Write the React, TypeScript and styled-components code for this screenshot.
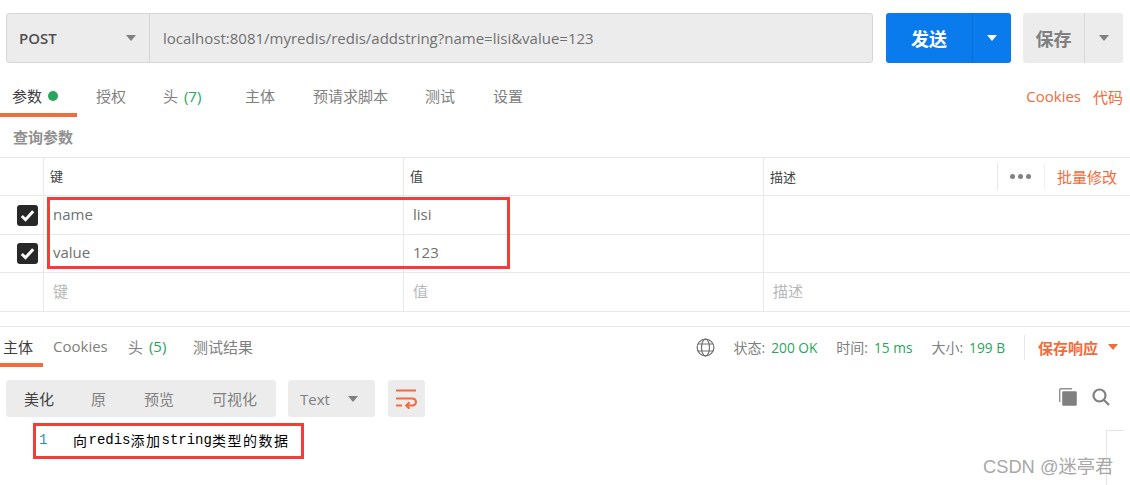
import React from "react";
import styled, { createGlobalStyle } from "styled-components";

const ORANGE = "#f26b3a";
const GREEN = "#26a65b";
const LINE = "#e8e8e8";
const FONT = `"Open Sans", "Noto Sans CJK SC", sans-serif`;

const Global = createGlobalStyle`
  html, body { margin: 0; padding: 0; background: #fff; }
  body { font-family: ${FONT}; font-size: 15px; color: #808080; }
`;

const Page = styled.div`
  position: relative;
  width: 1130px;
  height: 485px;
  overflow: hidden;
  background: #fff;
`;

const TopBar = styled.div`
  display: flex;
  padding: 13px 7px 0 6px;
  height: 50px;
`;

const UrlGroup = styled.div`
  display: flex;
  width: 867px;
  height: 50px;
  box-sizing: border-box;
  background: #ececec;
  border: 1px solid #d6d6d6;
  border-radius: 3px;
`;

const MethodSelect = styled.div`
  display: flex;
  align-items: center;
  justify-content: space-between;
  width: 143px;
  box-sizing: border-box;
  padding: 0 13px 0 12px;
  border-right: 1px solid #d6d6d6;
  color: #505050;
  font-size: 15px;
  font-weight: 600;
`;

const UrlText = styled.div`
  display: flex;
  align-items: center;
  padding-left: 13px;
  font-size: 15px;
  color: #707070;
`;

const Caret = styled.span<{ $color?: string; $w?: number }>`
  display: inline-block;
  width: 0;
  height: 0;
  border-left: ${(p) => (p.$w ?? 10) / 2}px solid transparent;
  border-right: ${(p) => (p.$w ?? 10) / 2}px solid transparent;
  border-top: 6px solid ${(p) => p.$color ?? "#808080"};
`;

const SplitButton = styled.div<{ $bg: string; $fg: string; $divider: string; $w: number; $ml: number; $main: number }>`
  display: grid;
  grid-template-columns: ${(p) => p.$main}px 1fr;
  width: ${(p) => p.$w}px;
  height: 50px;
  margin-left: ${(p) => p.$ml}px;
  border-radius: 3px;
  background: ${(p) => p.$bg};
  color: ${(p) => p.$fg};
  font-size: 18px;
  font-weight: 700;
  & > * {
    display: flex;
    align-items: center;
    justify-content: center;
  }
  & > *:first-child {
    border-right: 1px solid ${(p) => p.$divider};
  }
`;

const Tabs = styled.div<{ $h: number }>`
  display: flex;
  align-items: center;
  height: ${(p) => p.$h}px;
`;

const RequestTabs = styled(Tabs)`
  margin-top: 13px;
  justify-content: space-between;
  padding-right: 7px;
`;

const TabList = styled.div`
  display: flex;
  height: 100%;
`;

const Tab = styled.div<{ $w: number; $active?: boolean; $pl?: number }>`
  display: flex;
  align-items: center;
  box-sizing: border-box;
  width: ${(p) => p.$w}px;
  height: 100%;
  padding-top: 2px;
  padding-left: ${(p) => p.$pl ?? 0}px;
  border-bottom: 4px solid ${(p) => (p.$active ? ORANGE : "transparent")};
  color: ${(p) => (p.$active ? "#404040" : "#808080")};
  font-size: 15px;
  white-space: pre;
`;

const Count = styled.span`
  color: ${GREEN};
  margin-left: 2px;
`;

const Dot = styled.span`
  width: 10px;
  height: 10px;
  margin-left: 6px;
  border-radius: 50%;
  background: ${GREEN};
`;

const Links = styled.div`
  display: flex;
  gap: 12px;
  color: ${ORANGE};
  font-size: 15px;
  padding-bottom: 1px;
`;

const SectionTitle = styled.div`
  box-sizing: border-box;
  height: 40px;
  padding: 0 0 2px 13px;
  display: flex;
  align-items: center;
  font-size: 15px;
  font-weight: 700;
  color: #909090;
`;

const Table = styled.div`
  border-top: 1px solid ${LINE};
`;

const Row = styled.div<{ $h: number }>`
  display: grid;
  grid-template-columns: 44px 360px 360px 1fr;
  height: ${(p) => p.$h}px;
  box-sizing: border-box;
  border-bottom: 1px solid ${LINE};
`;

const Cell = styled.div<{ $kind?: "head" | "value" | "hint" }>`
  display: flex;
  align-items: center;
  box-sizing: border-box;
  padding-left: ${(p) => (p.$kind === "head" ? 6 : 9)}px;
  padding-bottom: ${(p) => (p.$kind === "hint" ? 4 : p.$kind === "value" ? 3 : 2)}px;
  border-right: 1px solid ${LINE};
  font-size: ${(p) => (p.$kind === "head" ? 13 : 15)}px;
  color: ${(p) => (p.$kind === "head" ? "#404040" : p.$kind === "hint" ? "#b8b8b8" : "#707070")};
  &:last-child {
    border-right: 0;
  }
`;

const CheckCell = styled.div`
  display: flex;
  align-items: center;
  padding-left: 17px;
  box-sizing: border-box;
  border-right: 1px solid ${LINE};
`;

const CheckBox = styled.div`
  display: flex;
  align-items: center;
  justify-content: center;
  flex: none;
  width: 21px;
  height: 21px;
  border-radius: 3px;
  background: #282828;
`;

const DescHead = styled(Cell)`
  justify-content: space-between;
  padding-right: 13px;
  padding-bottom: 0;
`;

const HeadTools = styled.div`
  display: flex;
  align-items: center;
  height: 27px;
  border-left: 1px solid ${LINE};
`;

const Dots = styled.span`
  display: flex;
  gap: 3px;
  width: 46px;
  justify-content: center;
  & > i {
    width: 5px;
    height: 5px;
    border-radius: 50%;
    background: #808080;
  }
`;

const BulkEdit = styled.span`
  display: flex;
  align-items: center;
  height: 27px;
  padding-left: 12px;
  border-left: 1px solid #f0f0f0;
  border-radius: 3px;
  color: ${ORANGE};
  font-size: 15px;
`;

const ResponseHead = styled.div`
  display: flex;
  justify-content: space-between;
  height: 40px;
  margin-top: 14px;
  border-top: 1px solid ${LINE};
`;

const Status = styled.div`
  display: flex;
  align-items: center;
  padding-right: 12px;
  font-size: 14px;
  color: #808080;
`;

const StatLabel = styled.span<{ $ml: number }>`
  margin-left: ${(p) => p.$ml}px;
`;

const StatValue = styled.span`
  margin-left: 6px;
  color: ${GREEN};
  font-size: 13.7px;
`;

const SaveResponse = styled.div`
  display: flex;
  align-items: center;
  gap: 10px;
  height: 25px;
  margin-left: 19px;
  padding-left: 13px;
  border-left: 1px solid ${LINE};
  color: ${ORANGE};
  font-size: 15px;
  font-weight: 700;
`;

const Toolbar = styled.div`
  display: flex;
  align-items: center;
  height: 37px;
  margin-top: 13px;
  padding: 0 20px 0 6px;
`;

const Segments = styled.div`
  display: flex;
  align-items: center;
  width: 270px;
  height: 37px;
  border-radius: 3px;
  background: #ececec;
  font-size: 15px;
  color: #808080;
`;

const Segment = styled.span<{ $w: number; $active?: boolean }>`
  width: ${(p) => p.$w}px;
  text-align: center;
  color: ${(p) => (p.$active ? "#404040" : "#808080")};
`;

const FormatSelect = styled.div`
  display: flex;
  align-items: center;
  justify-content: space-between;
  box-sizing: border-box;
  width: 87px;
  height: 37px;
  margin-left: 12px;
  padding: 0 17px 0 12px;
  border-radius: 3px;
  background: #ececec;
  font-size: 15px;
  color: #808080;
`;

const WrapButton = styled.div`
  display: flex;
  align-items: center;
  justify-content: center;
  width: 37px;
  height: 37px;
  margin-left: 13px;
  border-radius: 3px;
  background: #ececec;
`;

const ToolIcons = styled.div`
  display: flex;
  align-items: center;
  gap: 15px;
  margin: 0 0 4px auto;
`;

const CodeLine = styled.div`
  display: flex;
  align-items: center;
  height: 24px;
  margin-top: 11px;
  padding-left: 39px;
  font-family: "Liberation Mono", "Noto Sans CJK SC", monospace;
  font-size: 14px;
  color: #000;
`;

const LineNo = styled.span`
  width: 34px;
  color: #2a8fbd;
`;

const CjkRun = styled.span`
  letter-spacing: 1.5px;
`;

const Annotation = styled.div<{ $x: number; $y: number; $w: number; $h: number }>`
  position: absolute;
  left: ${(p) => p.$x}px;
  top: ${(p) => p.$y}px;
  width: ${(p) => p.$w}px;
  height: ${(p) => p.$h}px;
  box-sizing: border-box;
  border: 3px solid #f83a3a;
`;

const Watermark = styled.div`
  position: absolute;
  left: 983px;
  top: 455px;
  font-family: "Liberation Sans", "Noto Sans CJK SC", sans-serif;
  font-size: 18.3px;
  line-height: 24px;
  color: #a8a8a8;
`;

const EditorCorner = styled.div`
  position: absolute;
  left: 1106px;
  top: 430px;
  width: 17px;
  height: 55px;
  border-top: 1px solid #e4e4e4;
  border-left: 1px solid #e4e4e4;
`;

const Check = () => (
  <svg width="15" height="13" viewBox="0 0 15 13">
    <path d="M1.8 7l3.7 3.7L13.2 2.2" fill="none" stroke="#fff" strokeWidth="3" />
  </svg>
);

const Globe = () => (
  <svg width="19" height="19" viewBox="0 0 19 19" fill="none" stroke="#707070" strokeWidth="1.2">
    <circle cx="9.5" cy="9.5" r="8.4" />
    <ellipse cx="9.5" cy="9.5" rx="4" ry="8.4" />
    <path d="M2 6h15M2 13h15" />
  </svg>
);

const WrapIcon = () => (
  <svg width="21" height="21" viewBox="0 0 21 21" fill="none" stroke={ORANGE} strokeWidth="2">
    <path d="M0 2.5h20M0 10.5h16.5a3.2 3.2 0 0 1 0 7H10M0 17.5h6" />
    <path d="M13.5 14.3L10.2 17.5l3.3 3.2" />
  </svg>
);

const CopyIcon = () => (
  <svg width="18" height="18" viewBox="0 0 18 18">
    <path d="M0 14V2a2 2 0 0 1 2-2h11v1.4H2.4A1 1 0 0 0 1.4 2.4V14z" fill="#909090" />
    <rect x="3.2" y="3.2" width="14.6" height="14.6" rx="1" fill="#808080" />
  </svg>
);

const SearchIcon = () => (
  <svg width="18" height="18" viewBox="0 0 18 18" fill="none" stroke="#808080" strokeWidth="2.2">
    <circle cx="7.5" cy="7.5" r="6" />
    <path d="M12 12l5 5" />
  </svg>
);

const params = [
  { k: "name", v: "lisi", h: 39 },
  { k: "value", v: "123", h: 38 },
];

export default function App() {
  return (
    <Page>
      <Global />
      <TopBar>
        <UrlGroup>
          <MethodSelect>
            POST
            <Caret />
          </MethodSelect>
          <UrlText>localhost:8081/myredis/redis/addstring?name=lisi&amp;value=123</UrlText>
        </UrlGroup>
        <SplitButton $bg="#097bed" $fg="#fff" $divider="#0a6fd6" $w={125} $ml={13} $main={87}>
          <span>发送</span>
          <span>
            <Caret $color="#fff" />
          </span>
        </SplitButton>
        <SplitButton $bg="#ececec" $fg="#808080" $divider="#d8d8d8" $w={100} $ml={12} $main={62}>
          <span>保存</span>
          <span>
            <Caret />
          </span>
        </SplitButton>
      </TopBar>

      <RequestTabs $h={41}>
        <TabList>
          <Tab $w={77} $pl={12} $active>
            参数
            <Dot />
          </Tab>
          <Tab $w={86} $pl={19}>授权</Tab>
          <Tab $w={82}>
            头 <Count>(7)</Count>
          </Tab>
          <Tab $w={68}>主体</Tab>
          <Tab $w={112}>预请求脚本</Tab>
          <Tab $w={68}>测试</Tab>
          <Tab $w={60}>设置</Tab>
        </TabList>
        <Links>
          <span>Cookies</span>
          <span>代码</span>
        </Links>
      </RequestTabs>

      <SectionTitle>查询参数</SectionTitle>

      <Table>
        <Row $h={38}>
          <CheckCell />
          <Cell $kind="head">键</Cell>
          <Cell $kind="head">值</Cell>
          <DescHead $kind="head">
            描述
            <HeadTools>
              <Dots>
                <i />
                <i />
                <i />
              </Dots>
              <BulkEdit>批量修改</BulkEdit>
            </HeadTools>
          </DescHead>
        </Row>
        {params.map((p) => (
          <Row key={p.k} $h={p.h}>
            <CheckCell>
              <CheckBox>
                <Check />
              </CheckBox>
            </CheckCell>
            <Cell $kind="value">{p.k}</Cell>
            <Cell $kind="value">{p.v}</Cell>
            <Cell />
          </Row>
        ))}
        <Row $h={39}>
          <CheckCell />
          <Cell $kind="hint">键</Cell>
          <Cell $kind="hint">值</Cell>
          <Cell $kind="hint">描述</Cell>
        </Row>
      </Table>

      <ResponseHead>
        <TabList>
          <Tab $w={43} $pl={3} $active>主体</Tab>
          <Tab $w={85} $pl={10}>Cookies</Tab>
          <Tab $w={65}>
            头 <Count>(5)</Count>
          </Tab>
          <Tab $w={70}>测试结果</Tab>
        </TabList>
        <Status>
          <Globe />
          <StatLabel $ml={19}>状态:</StatLabel>
          <StatValue>200 OK</StatValue>
          <StatLabel $ml={19}>时间:</StatLabel>
          <StatValue>15 ms</StatValue>
          <StatLabel $ml={19}>大小:</StatLabel>
          <StatValue>199 B</StatValue>
          <SaveResponse>
            保存响应
            <Caret $color={ORANGE} />
          </SaveResponse>
        </Status>
      </ResponseHead>

      <Toolbar>
        <Segments>
          <Segment $w={66} $active>美化</Segment>
          <Segment $w={53}>原</Segment>
          <Segment $w={68}>预览</Segment>
          <Segment $w={83}>可视化</Segment>
        </Segments>
        <FormatSelect>
          Text
          <Caret />
        </FormatSelect>
        <WrapButton>
          <WrapIcon />
        </WrapButton>
        <ToolIcons>
          <CopyIcon />
          <SearchIcon />
        </ToolIcons>
      </Toolbar>

      <CodeLine>
        <LineNo>1</LineNo>
        <CjkRun>向</CjkRun>
        <span>redis</span>
        <CjkRun>添加</CjkRun>
        <span>string</span>
        <CjkRun>类型的数据</CjkRun>
      </CodeLine>

      <Annotation $x={47} $y={197} $w={463} $h={72} />
      <Annotation $x={33} $y={423} $w={271} $h={36} />
      <EditorCorner />
      <Watermark>CSDN @迷亭君</Watermark>
    </Page>
  );
}
